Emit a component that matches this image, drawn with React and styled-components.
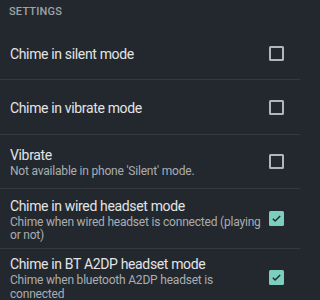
import React from "react";
import styled, { createGlobalStyle } from "styled-components";

const Global = createGlobalStyle`
  html, body {
    margin: 0;
    padding: 0;
    background: #23282e;
  }
  body {
    font-family: Roboto, "Liberation Sans", sans-serif;
  }
`;

const Screen = styled.div`
  width: 300px;
  height: 300px;
  overflow: hidden;
  background: #23282e;
`;

const Header = styled.div`
  height: 27px;
  padding: 5px 0 0 9px;
  box-sizing: border-box;
  color: #9ea3a8;
  font-size: 11px;
  font-weight: 500;
  letter-spacing: 0.2px;
`;

const Row = styled.div`
  display: flex;
  align-items: center;
  min-height: ${(p) => p.$h}px;
  box-sizing: border-box;
  padding: ${(p) => p.$pt}px 16px 5px 10px;
  border-bottom: 1px solid #353a40;
`;

const Texts = styled.div`
  flex: 1;
  padding-right: 8px;
`;

const Title = styled.div`
  color: #e2e4e6;
  font-size: 14px;
  letter-spacing: -0.35px;
  line-height: 18px;
`;

const Summary = styled.div`
  margin-top: 1px;
  color: #a9adb1;
  font-size: 12px;
  letter-spacing: -0.2px;
  line-height: 13.5px;
`;

const Box = styled.div`
  width: 15px;
  height: 15px;
  margin-top: -2px;
  box-sizing: border-box;
  border-radius: 1.5px;
  border: ${(p) => (p.$on ? "none" : "2px solid #b3b6b9")};
  background: ${(p) => (p.$on ? "#7ccfbf" : "transparent")};
  display: flex;
  align-items: center;
  justify-content: center;
  flex-shrink: 0;
`;

const Check = () => (
  <svg width="11" height="11" viewBox="0 0 24 24">
    <path d="M4 12.5l5 5L20 6.5" fill="none" stroke="#23282e" strokeWidth="3.2" />
  </svg>
);

const items = [
  { title: "Chime in silent mode", h: 53, pt: 7 },
  { title: "Chime in vibrate mode", h: 55, pt: 7 },
  { title: "Vibrate", summary: "Not available in phone 'Silent' mode.", h: 54, pt: 7 },
  {
    title: "Chime in wired headset mode",
    summary: "Chime when wired headset is connected (playing or not)",
    on: true,
    h: 60,
    pt: 7,
  },
  {
    title: "Chime in BT A2DP headset mode",
    summary: "Chime when bluetooth A2DP headset is connected",
    on: true,
    h: 60,
    pt: 4,
  },
];

export default function App() {
  return (
    <Screen>
      <Global />
      <Header>SETTINGS</Header>
      {items.map((it) => (
        <Row key={it.title} $h={it.h} $pt={it.pt}>
          <Texts>
            <Title>{it.title}</Title>
            {it.summary && <Summary>{it.summary}</Summary>}
          </Texts>
          <Box $on={it.on}>{it.on && <Check />}</Box>
        </Row>
      ))}
    </Screen>
  );
}
